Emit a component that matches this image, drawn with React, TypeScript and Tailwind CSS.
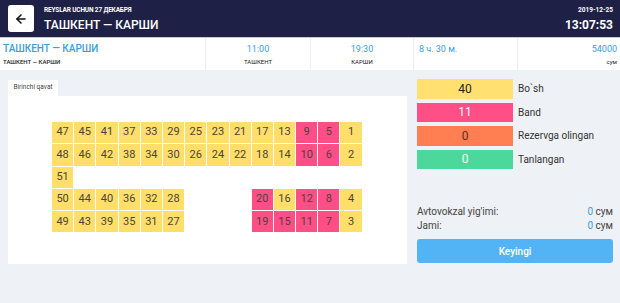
import React from "react";

type Seat = { n: number; b?: boolean } | null;

const Y = "bg-[#ffde6a]";
const P = "bg-[#ff4f86]";

const rows: Seat[][] = [
  [47, 45, 41, 37, 33, 29, 25, 23, 21, 17, 13, 9, 5, 1].map((n) => ({ n, b: n === 9 || n === 5 })),
  [48, 46, 42, 38, 34, 30, 26, 24, 22, 18, 14, 10, 6, 2].map((n) => ({ n, b: n === 10 || n === 6 })),
  [{ n: 51 }, null, null, null, null, null, null, null, null, null, null, null, null, null],
  [50, 44, 40, 36, 32, 28, 0, 0, 0, 20, 16, 12, 8, 4].map((n) =>
    n === 0 ? null : { n, b: [20, 12, 8].includes(n) }
  ),
  [49, 43, 39, 35, 31, 27, 0, 0, 0, 19, 15, 11, 7, 3].map((n) =>
    n === 0 ? null : { n, b: [19, 15, 11, 7].includes(n) }
  ),
];

export default function App() {
  return (
    <div className="w-[620px] h-[303px] bg-[#eef1f5] overflow-hidden" style={{ fontFamily: "Roboto, 'Liberation Sans', sans-serif" }}>
      {/* header */}
      <div className="h-[37px] bg-[#1f2046] flex items-center justify-between pl-2 pr-[7px]">
        <div className="flex items-center">
          <div className="w-[26px] h-[27px] bg-white rounded-[3px] flex items-center justify-center">
            <svg width="14" height="14" viewBox="0 0 24 24" fill="none" stroke="#111" strokeWidth="2.6" strokeLinecap="round" strokeLinejoin="round">
              <path d="M19 12H5" />
              <path d="M12 19l-7-7 7-7" />
            </svg>
          </div>
          <div className="ml-[10px] flex flex-col text-white">
            <div className="text-[6.5px] font-bold leading-[8px] tracking-tight">REYSLAR UCHUN 27 ДЕКАБРЯ</div>
            <div className="text-[12px] font-medium leading-[14px] mt-[4px]">ТАШКЕНТ — КАРШИ</div>
          </div>
        </div>
        <div className="flex flex-col items-end text-white">
          <div className="text-[6.5px] font-bold leading-[8px]">2019-12-25</div>
          <div className="text-[12px] font-bold leading-[14px] mt-[4px]">13:07:53</div>
        </div>
      </div>
      {/* info bar */}
      <div className="h-[33px] bg-white border-t border-[#c9ccd3] flex">
        <div className="w-[205px] pl-[3px] flex flex-col justify-center">
          <div className="text-[10px] font-medium text-[#3a9de0] leading-[12px]">ТАШКЕНТ — КАРШИ</div>
          <div className="text-[6px] font-medium text-[#222] leading-[8px] mt-[3px]">ТАШКЕНТ — КАРШИ</div>
        </div>
        <div className="w-[105px] border-l border-[#eceef2] flex flex-col items-center justify-center">
          <div className="text-[9px] text-[#3a9de0] leading-[12px]">11:00</div>
          <div className="text-[6px] text-[#222] leading-[8px] mt-[3px]">ТАШКЕНТ</div>
        </div>
        <div className="w-[103px] border-l border-[#eceef2] flex flex-col items-center justify-center">
          <div className="text-[9px] text-[#3a9de0] leading-[12px]">19:30</div>
          <div className="text-[6px] text-[#222] leading-[8px] mt-[3px]">КАРШИ</div>
        </div>
        <div className="w-[104px] border-l border-[#eceef2] pl-[5px] flex flex-col justify-center">
          <div className="text-[9px] text-[#3a9de0] leading-[12px]">8 ч. 30 м.</div>
          <div className="h-[8px] mt-[3px]" />
        </div>
        <div className="flex-1 border-l border-[#eceef2] pr-[3px] flex flex-col items-end justify-center">
          <div className="text-[9px] text-[#3a9de0] leading-[12px]">54000</div>
          <div className="text-[6px] text-[#222] leading-[8px] mt-[3px]">сум</div>
        </div>
      </div>
      {/* body */}
      <div className="flex pl-2 pt-[10px] gap-[10px]">
        <div className="w-[399px] flex flex-col">
          <div className="w-[50px] h-[16px] bg-white flex items-center justify-center text-[6.5px] text-[#444]">Birinchi qavat</div>
          <div className="h-[168px] bg-white pt-[26px] pl-[44px]">
            <div className="flex flex-col gap-px">
              {rows.map((r, i) => (
                <div key={i} className="flex gap-px">
                  {r.map((s, j) =>
                    s ? (
                      <div
                        key={j}
                        className={`w-[21.2px] h-[21.3px] flex items-center justify-center text-[11px] text-[#4a4340] ${s.b ? P : Y}`}
                      >
                        {s.n}
                      </div>
                    ) : (
                      <div key={j} className="w-[21.2px] h-[21.3px]" />
                    )
                  )}
                </div>
              ))}
            </div>
          </div>
        </div>
        <div className="w-[196px] flex flex-col -mt-px">
          <div className="flex flex-col gap-[4px]">
            {[
              { v: "40", l: "Bo`sh", c: "bg-[#ffe070] text-[#222]" },
              { v: "11", l: "Band", c: "bg-[#ff4f86] text-white" },
              { v: "0", l: "Rezervga olingan", c: "bg-[#ff7e52] text-[#5a3020]" },
              { v: "0", l: "Tanlangan", c: "bg-[#4dd89b] text-white" },
            ].map((x, i) => (
              <div key={i} className="flex items-center">
                <div className={`w-[96px] h-[19.5px] flex items-center justify-center text-[12px] ${x.c}`}>{x.v}</div>
                <div className="ml-[5px] text-[10px] text-[#333]">{x.l}</div>
              </div>
            ))}
          </div>
          <div className="mt-[36px] flex justify-between text-[10px] text-[#444] leading-[14px]">
            <span>Avtovokzal yig'imi:</span>
            <span><span className="text-[#3a9de0]">0</span> сум</span>
          </div>
          <div className="flex justify-between text-[10px] text-[#444] leading-[14px]">
            <span>Jami:</span>
            <span><span className="text-[#3a9de0]">0</span> сум</span>
          </div>
          <div className="mt-[6px] h-[24px] rounded-[3px] bg-[#52b4f5] flex items-center justify-center text-[10px] font-medium text-white">Keyingi</div>
        </div>
      </div>
    </div>
  );
}
